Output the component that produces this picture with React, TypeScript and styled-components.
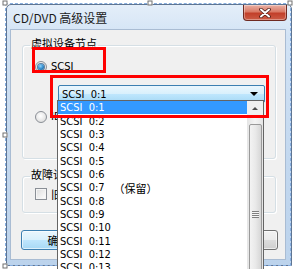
import React from "react";
import styled, { createGlobalStyle } from "styled-components";

const GlobalStyle = createGlobalStyle`
	html, body {
		margin: 0;
		padding: 0;
		background: #ffffff;
	}
	body {
		font-family: "Noto Sans CJK SC", "Noto Sans", sans-serif;
	}
`;

const Stage = styled.div`
	width: 294px;
	height: 269px;
	position: relative;
	overflow: hidden;

	box-sizing: border-box;
	padding: 4px 2px 0 6px;
	background: #ffffff;
`;

const Window = styled.div`
	width: 286px;
	height: 262px;

	box-sizing: border-box;
	display: flex;
	flex-direction: column;
	padding: 0 5px 5px 3px;

	border: 1px solid #5f7592;
	border-radius: 5px 5px 0 0;
	background: linear-gradient(180deg, #e4eef9 0%, #d2e3f5 12%, #c3d8ef 60%, #bcd3ec 100%);
`;

const TitleBar = styled.div`
	height: 24px;

	display: flex;
	align-items: flex-start;
	flex-shrink: 0;
`;

const Title = styled.div`
	height: 24px;
	margin-left: 3px;

	display: flex;
	align-items: center;

	font-size: 12px;
	color: #1b1b1b;
`;

const CloseButton = styled.div`
	width: 44px;
	height: 16px;
	margin-left: auto;
	margin-right: -1px;

	box-sizing: border-box;
	display: flex;
	align-items: center;
	justify-content: center;

	border: 1px solid #6e2a22;
	border-top: none;
	border-radius: 0 0 4px 4px;
	background: linear-gradient(180deg, #eab0a4 0%, #d97a66 45%, #c23f2a 55%, #cc5c46 100%);
	box-shadow: inset 0 0 0 1px rgba(255, 255, 255, 0.35);
`;

const Client = styled.div`
	flex: 1;

	box-sizing: border-box;
	display: flex;
	flex-direction: column;
	padding: 6px 9px 0 11px;

	border: 1px solid #a9bcd3;
	background: #f0f0f0;
	font-size: 11px;
	color: #000000;
`;

const Group = styled.fieldset<{ $height: number; $gap: number }>`
	height: ${({ $height }) => $height}px;
	margin: ${({ $gap }) => $gap}px 0 0 0;
	padding: 0;

	box-sizing: border-box;
	display: flex;
	flex-direction: column;
	min-width: 0;

	border: 1px solid #d5dfe5;
	border-radius: 3px;
	box-shadow: inset 1px 1px 0 #ffffff, 1px 1px 0 #ffffff;
`;

const Legend = styled.legend`
	margin-left: 7px;
	padding: 0 1px 4px;

	font-size: 11px;
	line-height: 14px;
	color: #000000;
`;

const OptionRow = styled.div<{ $top: number }>`
	height: 13px;
	margin: ${({ $top }) => $top}px 0 0 12px;

	display: flex;
	align-items: center;
	gap: 4px;

	font-family: "DejaVu Sans Condensed", "DejaVu Sans", sans-serif;
	font-size: 11px;
`;

const Radio = styled.span<{ $checked?: boolean }>`
	width: 12px;
	height: 12px;

	box-sizing: border-box;
	display: flex;
	align-items: center;
	justify-content: center;
	flex-shrink: 0;

	border: 1px solid #8a8f96;
	border-radius: 50%;
	background: radial-gradient(circle at 45% 40%, #ffffff 0%, #e6e6e6 60%, #cfcfcf 100%);

	&::after {
		content: "";
		width: 6px;
		height: 6px;
		display: ${({ $checked }) => ($checked ? "block" : "none")};
		border-radius: 50%;
		background: radial-gradient(circle at 40% 35%, #8fd3fb 0%, #2b86c9 55%, #124c7a 100%);
		box-shadow: 0 0 0 1px #5a7ea0;
	}
`;

const Checkbox = styled.span`
	width: 12px;
	height: 12px;

	box-sizing: border-box;
	flex-shrink: 0;

	border: 1px solid #8a8f96;
	background: linear-gradient(135deg, #dcdcdc 0%, #f4f4f4 70%, #ffffff 100%);
	box-shadow: inset 0 0 0 1px #f5f5f5;
`;

const CjkText = styled.span`
	font-family: "Noto Sans CJK SC", sans-serif;
	font-size: 11px;
`;

const Combo = styled.div`
	width: 207px;
	height: 18px;
	margin: 12px 0 0 35px;

	box-sizing: border-box;
	display: flex;
	align-items: center;
	padding: 0 6px 0 3px;

	border: 1px solid #3c7fb1;
	border-radius: 2px;
	background: linear-gradient(180deg, #eaf6fd 0%, #d9f0fc 48%, #bee6fd 52%, #a7d9f5 100%);

	font-family: "DejaVu Sans Condensed", "DejaVu Sans", sans-serif;
	font-size: 11px;
	white-space: pre;
`;

const Arrow = styled.span`
	width: 0;
	height: 0;
	margin-left: auto;

	border-left: 4px solid transparent;
	border-right: 4px solid transparent;
	border-top: 4px solid #000000;
`;

const ButtonRow = styled.div`
	margin: 17px -2px 0 -1px;

	display: flex;
	justify-content: space-between;
`;

const Button = styled.div<{ $default?: boolean }>`
	width: 75px;
	height: 20px;

	box-sizing: border-box;
	display: flex;
	align-items: center;
	justify-content: center;

	border: 1px solid ${({ $default }) => ($default ? "#3c7fb1" : "#707070")};
	border-radius: 3px;
	background: ${({ $default }) =>
		$default
			? "linear-gradient(180deg, #eaf6fd 0%, #d9f0fc 48%, #bee6fd 52%, #a7d9f5 100%)"
			: "linear-gradient(180deg, #f2f2f2 0%, #ebebeb 48%, #dddddd 52%, #cfcfcf 100%)"};
	box-shadow: inset 0 0 0 1px rgba(255, 255, 255, 0.6);

	font-size: 11px;
`;

const Selection = styled.div`
	width: 286px;
	height: 263px;

	position: absolute;
	left: 5px;
	top: 3px;

	box-sizing: border-box;
	border: 1px dashed #86aee0;
	pointer-events: none;
`;

const Handle = styled.span<{ $x: string; $y: string }>`
	width: 5px;
	height: 5px;

	position: absolute;
	left: ${({ $x }) => $x};
	top: ${({ $y }) => $y};
	transform: translate(-50%, -50%);

	box-sizing: border-box;
	border: 1px solid #707070;
	background: #ffffff;
`;

const DropList = styled.div`
	width: 207px;
	height: 180px;

	position: absolute;
	left: 57px;
	top: 100px;

	box-sizing: border-box;
	display: flex;

	border: 1px solid #646464;
	background: #ffffff;
`;

const Items = styled.div`
	flex: 1;

	display: flex;
	flex-direction: column;
`;

const Item = styled.div<{ $selected?: boolean }>`
	height: 13.35px;
	padding-left: 2px;

	display: flex;
	align-items: center;
	flex-shrink: 0;

	background: ${({ $selected }) => ($selected ? "#3399ff" : "transparent")};
	color: ${({ $selected }) => ($selected ? "#ffffff" : "#000000")};
	font-family: "DejaVu Sans Condensed", "DejaVu Sans", sans-serif;
	font-size: 11px;
	white-space: pre;
`;

const Note = styled.span`
	margin-left: 9px;

	font-family: "Noto Sans CJK SC", sans-serif;
	font-size: 11px;
`;

const ScrollBar = styled.div`
	width: 16px;

	display: flex;
	flex-direction: column;
	align-items: center;

	background: linear-gradient(90deg, #e5e5e5 0%, #f4f4f4 50%, #e5e5e5 100%);
`;

const ScrollUp = styled.div`
	width: 16px;
	height: 15px;

	display: flex;
	align-items: center;
	justify-content: center;
	flex-shrink: 0;

	background: #f0f0f0;

	&::after {
		content: "";
		border-left: 3px solid transparent;
		border-right: 3px solid transparent;
		border-bottom: 3px solid #4d4d4d;
	}
`;

const Thumb = styled.div`
	width: 13px;
	height: 180px;
	margin-top: 8px;

	box-sizing: border-box;
	display: flex;
	align-items: center;
	justify-content: center;
	flex-shrink: 0;

	border: 1px solid #9a9a9a;
	border-radius: 2px;
	background: linear-gradient(90deg, #f3f3f3 0%, #e9e9e9 50%, #d6d6d6 100%);
`;

const Grip = styled.div`
	width: 7px;
	height: 7px;

	background: repeating-linear-gradient(180deg, #7f7f7f 0 1px, #f5f5f5 1px 2px);
`;

const Mark = styled.div<{ $x: number; $y: number; $w: number; $h: number }>`
	width: ${({ $w }) => $w}px;
	height: ${({ $h }) => $h}px;

	position: absolute;
	left: ${({ $x }) => $x}px;
	top: ${({ $y }) => $y}px;

	box-sizing: border-box;
	border: 3px solid #ff0000;
	pointer-events: none;
`;

function CloseGlyph() {
	return (
		<svg width="12" height="10" viewBox="0 0 12 10">
			<path d="M2 1.5 L10 8.5 M10 1.5 L2 8.5" stroke="#4a1a14" strokeWidth="3.6" strokeLinecap="round" />
			<path d="M2 1.5 L10 8.5 M10 1.5 L2 8.5" stroke="#ffffff" strokeWidth="2" strokeLinecap="round" />
		</svg>
	);
}

function App() {
	const slots = Array.from({ length: 13 }, (_, i) => i + 1);
	return (
		<>
			<GlobalStyle />
			<Stage>
				<Window>
					<TitleBar>
						<Title>CD/DVD 高级设置</Title>
						<CloseButton>
							<CloseGlyph />
						</CloseButton>
					</TitleBar>
					<Client>
						<Group $height={123} $gap={0}>
							<Legend>虚拟设备节点</Legend>
							<OptionRow $top={6}>
								<Radio $checked />
								<span>SCSI</span>
							</OptionRow>
							<Combo>
								{"SCSI  0:1"}
								<Arrow />
							</Combo>
							<OptionRow $top={7}>
								<Radio />
								<span>IDE</span>
							</OptionRow>
						</Group>
						<Group $height={46} $gap={8}>
							<Legend>故障诊断</Legend>
							<OptionRow $top={2}>
								<Checkbox />
								<CjkText>旧版兼容</CjkText>
							</OptionRow>
						</Group>
						<ButtonRow>
							<Button $default>确定</Button>
							<Button>取消</Button>
						</ButtonRow>
					</Client>
				</Window>

				<Selection />
				<Handle $x="5px" $y="3px" />
				<Handle $x="150px" $y="3px" />
				<Handle $x="290px" $y="3px" />
				<Handle $x="5px" $y="135px" />
				<Handle $x="5px" $y="266px" />

				<DropList>
					<Items>
						{slots.map((n) => (
							<Item key={n} $selected={n === 1}>
								{`SCSI  0:${n}`}
								{n === 7 && <Note>（保留）</Note>}
							</Item>
						))}
					</Items>
					<ScrollBar>
						<ScrollUp />
						<Thumb>
							<Grip />
						</Thumb>
					</ScrollBar>
				</DropList>

				<Mark $x={32} $y={47} $w={74} $h={26} />
				<Mark $x={50} $y={75} $w={219} $h={43} />
			</Stage>
		</>
	);
}

export default App;
